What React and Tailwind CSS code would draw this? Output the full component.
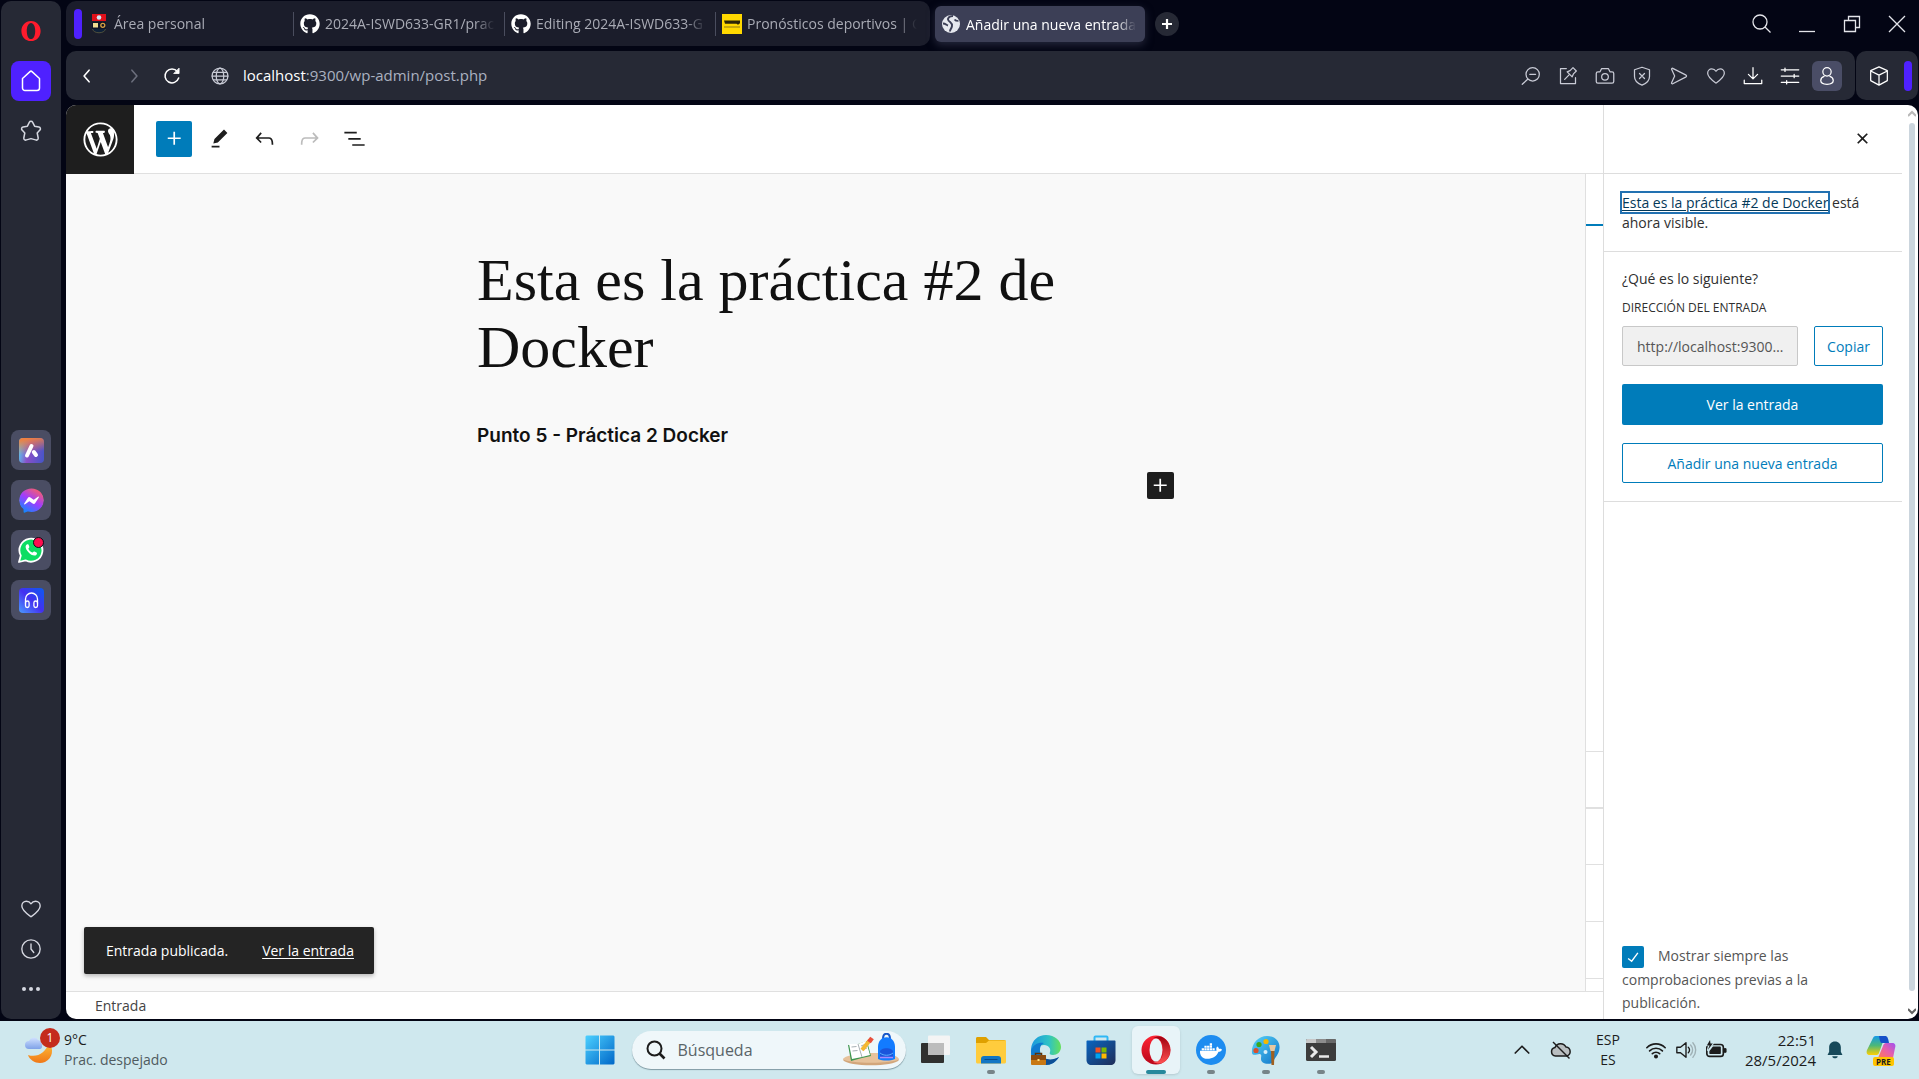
import React from "react";
import { FaGithub, FaFacebookMessenger, FaDocker } from "react-icons/fa";

const line = {
  fill: "none",
  stroke: "currentColor",
  strokeWidth: 1.5,
  strokeLinecap: "round",
  strokeLinejoin: "round",
};

function Svg({ size = 24, box = "0 0 24 24", className = "", children, ...rest }) {
  return (
    <svg width={size} height={size} viewBox={box} className={`shrink-0 ${className}`} aria-hidden="true" {...rest}>
      {children}
    </svg>
  );
}

function WpIcon({ d, className }) {
  return (
    <Svg size={27} fill="currentColor" className={className}>
      <path d={d} />
    </Svg>
  );
}

const PLUS = "M11 12.5V17.5H12.5V12.5H17.5V11H12.5V6H11V11H6V12.5H11Z";
const PENCIL = "m19 7-3-3-8.5 8.5-1 4 4-1L19 7Zm-7 11.5H5V20h7v-1.5Z";
const UNDO =
  "M18.3 11.7c-.6-.6-1.4-.9-2.3-.9H6.7l2.9-3.3-1.1-1-4.5 5L8.5 16l1-1-2.7-2.7H16c.5 0 .9.2 1.3.5 1 1 1 3.4 1 4.5v.3h1.5v-.2c0-1.5 0-4.3-1.5-5.7z";
const REDO =
  "M15.6 6.5l-1.1 1 2.9 3.3H8c-.9 0-1.7.3-2.3.9-1.4 1.5-1.4 4.2-1.4 5.6v.2h1.5v-.3c0-1.1 0-3.5 1-4.5.3-.3.7-.5 1.3-.5h9.2L14.5 15l1.1 1.1 4.6-4.6-4.6-5z";
const LIST = "M3 6h11v1.5H3V6Zm3.5 5.5h11V13h-11v-1.5ZM21 17H10v1.5h11V17Z";
const CLOSE =
  "M12 13.06l3.712 3.713 1.061-1.06L13.061 12l3.712-3.712-1.06-1.06L12 10.938 8.288 7.227l-1.061 1.06L10.939 12l-3.712 3.712 1.06 1.061L12 13.061z";
const WORDPRESS =
  "M20 10c0-5.51-4.49-10-10-10C4.48 0 0 4.49 0 10c0 5.52 4.48 10 10 10 5.51 0 10-4.48 10-10zM7.78 15.37L4.37 6.22c.55-.02 1.17-.08 1.17-.08.5-.06.44-1.13-.06-1.11 0 0-1.45.11-2.37.11-.18 0-.37 0-.58-.01C4.12 2.69 6.87 1.11 10 1.11c2.33 0 4.45.87 6.05 2.34-.68-.11-1.65.39-1.65 1.58 0 .74.45 1.36.9 2.1.35.61.55 1.36.55 2.46 0 1.49-1.4 5-1.4 5l-3.03-8.37c.54-.02.82-.17.82-.17.5-.05.44-1.25-.06-1.22 0 0-1.44.12-2.38.12-.87 0-2.33-.12-2.33-.12-.5-.03-.56 1.2-.06 1.22l.92.08 1.26 3.41zM17.41 10c.24-.64.74-1.87.43-4.25.7 1.29 1.05 2.71 1.05 4.25 0 3.29-1.73 6.24-4.4 7.78.97-2.59 1.94-5.2 2.92-7.78zM6.1 18.09C3.12 16.65 1.11 13.53 1.11 10c0-1.3.23-2.48.72-3.59C3.25 10.3 4.67 14.2 6.1 18.09zm4.03-6.63l2.58 6.98c-.86.29-1.76.45-2.71.45-.79 0-1.57-.11-2.29-.33.81-2.38 1.62-4.74 2.42-7.1z";

const HEART = "M12 20.5C8.500 18 2 13.500 2 8.700 2 5.700 4.200 3.500 7 3.500c2 0 3.800 1 5 2.800 1.200-1.800 3-2.800 5-2.800 2.800 0 5 2.200 5 5.200 0 4.800-6.500 9.300-10 11.800z";

/* ---------- Browser side bar ---------- */

function SideButton({ label, className = "", children }) {
  return (
    <button aria-label={label} className={`flex size-10 items-center justify-center rounded-lg ${className}`}>
      {children}
    </button>
  );
}

function SideBar() {
  return (
    <nav className="ml-px mt-px flex w-[60px] shrink-0 flex-col items-center rounded-[10px] bg-[#262935] text-[#d5d7e0]">
      <button aria-label="Opera" className="mt-5 flex size-5 items-center justify-center">
        <Svg size={22}>
          <path
            fillRule="evenodd"
            fill="#ff1b2d"
            d="M12 1C5.800 1 1.500 5.800 1.500 12S5.800 23 12 23s10.500-4.800 10.500-11S18.200 1 12 1zm0 2.200c3 0 4.600 4 4.600 8.800s-1.600 8.800-4.600 8.800S7.400 16.800 7.400 12 9 3.200 12 3.200z"
          />
        </Svg>
      </button>
      <SideButton label="Inicio" className="mt-5 bg-[#4f21ff] text-white">
        <Svg size={24} {...line}>
          <path d="M3.500 9.500 11 2.600a1.500 1.500 0 0 1 2 0l7.500 6.900V19a2.500 2.500 0 0 1-2.500 2.500H6A2.500 2.500 0 0 1 3.500 19z" />
        </Svg>
      </SideButton>
      <SideButton label="Favoritos" className="mt-[10px]">
        <Svg size={24} {...line}>
          <path d="M10.300 3.300a1.900 1.900 0 0 1 3.400 0l1.900 3.900 4.300.7a1.900 1.900 0 0 1 1 3.200l-2.700 2.900 1 5a1.800 1.800 0 0 1-2.600 1.900L12 19.600l-4.600 1.300A1.800 1.800 0 0 1 4.800 19l1-5-2.700-2.900a1.900 1.900 0 0 1 1-3.200l4.300-.7z" />
        </Svg>
      </SideButton>
      <div className="mt-[279px] flex flex-col gap-[10px]">
        <SideButton label="Aria" className="bg-[#4a4d63]">
          <Svg size={25} box="0 0 25 25">
            <defs>
              <linearGradient id="aria" x1="0" y1="0.400" x2="1" y2="0.600">
                <stop offset="0" stopColor="#58c8ee" />
                <stop offset="0.400" stopColor="#8a4fc8" />
                <stop offset="1" stopColor="#4a55c8" />
              </linearGradient>
              <linearGradient id="ariaTop" x1="0.400" y1="0" x2="0.600" y2="1">
                <stop offset="0" stopColor="#f08040" />
                <stop offset="0.600" stopColor="#f08040" stopOpacity="0" />
              </linearGradient>
            </defs>
            <rect width="25" height="25" rx="4" fill="url(#aria)" />
            <rect width="25" height="25" rx="4" fill="url(#ariaTop)" />
            <path d="M8 17.500 12.500 8M14.800 14l2.200 3" stroke="#fff" strokeWidth="4" strokeLinecap="round" />
          </Svg>
        </SideButton>
        <SideButton label="Messenger" className="bg-[#4a4d63]">
          <Svg size={25} box="0 0 512 512">
            <defs>
              <linearGradient id="msg" x1="0.200" y1="1" x2="0.800" y2="0">
                <stop offset="0" stopColor="#0a8cff" />
                <stop offset="0.500" stopColor="#a03cff" />
                <stop offset="1" stopColor="#ff6060" />
              </linearGradient>
            </defs>
            <ellipse cx="256" cy="250" rx="240" ry="220" fill="#fff" />
            <FaFacebookMessenger size={512} fill="url(#msg)" />
          </Svg>
        </SideButton>
        <SideButton label="WhatsApp" className="bg-[#4a4d63]">
          <Svg size={26} box="0 0 26 26">
            <path
              d="M1 25 2.800 18.600A11.500 11.500 0 1 1 7.500 23.300z"
              fill="#0ddd63"
              stroke="#fff"
              strokeWidth="1.800"
              strokeLinejoin="round"
            />
            <path
              d="M8.800 7.500c-1.800 1.200-1.600 4 1.200 7.200 3 3.500 6.500 4.800 8.300 3.200 1-1 .8-1.900.2-2.300l-2-1.100c-.7-.3-1 0-1.600.8-.5.500-1 .3-1.800-.2a9 9 0 0 1-2.700-3.200c-.2-.6.700-1 .9-1.700.2-.4-.6-2-.9-2.600-.4-.6-1-.5-1.600-.1z"
              fill="#fff"
            />
            <circle cx="20.500" cy="5.500" r="5" fill="#ff0f50" stroke="#0c0d16" strokeWidth="1" />
          </Svg>
        </SideButton>
        <SideButton label="Reproductor" className="bg-[#4a4d63]">
          <Svg size={25} box="0 0 25 25">
            <defs>
              <linearGradient id="player" x1="0" y1="1" x2="1" y2="0">
                <stop offset="0" stopColor="#4b9cff" />
                <stop offset="0.500" stopColor="#4430f0" />
                <stop offset="1" stopColor="#0a5cf0" />
              </linearGradient>
            </defs>
            <rect width="25" height="25" rx="4" fill="url(#player)" />
            <g fill="none" stroke="#fff" strokeWidth="1.300">
              <path d="M6.500 15.500V11a6 6 0 0 1 12 0v4.500" />
              <rect x="6.500" y="13" width="3.600" height="6.500" rx="1.800" />
              <rect x="14.900" y="13" width="3.600" height="6.500" rx="1.800" />
            </g>
          </Svg>
        </SideButton>
      </div>
      <div className="mt-auto flex flex-col pb-[10px]">
        <SideButton label="Me gusta">
          <Svg size={22} {...line}>
            <path d={HEART} />
          </Svg>
        </SideButton>
        <SideButton label="Historial">
          <Svg size={22} {...line}>
            <circle cx="12" cy="12" r="10" />
            <path d="M12 6.500V12l3 3.800" />
          </Svg>
        </SideButton>
        <SideButton label="Más">
          <Svg size={20} box="0 0 20 20" fill="currentColor">
            <circle cx="3" cy="10" r="2" />
            <circle cx="10" cy="10" r="2" />
            <circle cx="17" cy="10" r="2" />
          </Svg>
        </SideButton>
      </div>
    </nav>
  );
}

/* ---------- Tabs ---------- */

function Tab({ icon, title, className = "" }) {
  return (
    <button className={`flex h-9 w-[210px] shrink-0 items-center gap-[5px] pl-[6px] pr-[9px] text-left ${className}`}>
      {icon}
      <span className="flex-1 overflow-hidden whitespace-nowrap [mask-image:linear-gradient(to_right,black_88%,transparent)]">
        {title}
      </span>
    </button>
  );
}

function Divider() {
  return <span className="h-6 w-px shrink-0 bg-[#4a4d5e]" />;
}

function CrestIcon() {
  return (
    <Svg size={20} box="0 0 20 20">
      <rect x="3" y="0" width="14" height="7" fill="#e0101a" />
      <circle cx="10" cy="3.500" r="2.300" fill="#cfe6f5" />
      <rect x="3" y="8" width="14" height="8" fill="#101426" />
      <rect x="4" y="9" width="5" height="4.500" fill="#f0dc90" />
      <circle cx="13.800" cy="11.300" r="2" fill="none" stroke="#d8a040" strokeWidth="1.300" />
      <path d="M3.500 15c1 5 12 5 13 0" fill="#0e2038" stroke="#50503c" />
    </Svg>
  );
}

function TabStrip() {
  return (
    <header className="flex h-[50px] items-start text-[14px] text-[#a9abb5]">
      <div className="mt-px flex h-[45px] items-center rounded-[10px] bg-[#1b1d2b] pl-2 pr-1">
        <span className="h-[30px] w-2 rounded bg-[#4f21ff]" />
        <Tab icon={<CrestIcon />} title="Área personal" className="ml-px" />
        <Divider />
        <Tab icon={<FaGithub size={20} className="shrink-0 text-white" />} title="2024A-ISWD633-GR1/prac" />
        <Divider />
        <Tab icon={<FaGithub size={20} className="shrink-0 text-white" />} title="Editing 2024A-ISWD633-G" />
        <Divider />
        <Tab
          icon={
            <Svg size={20} box="0 0 20 20">
              <rect width="20" height="20" fill="#ffd800" />
              <path d="M2 6.500h16v2.800l-2 1.500-1.500-1H3z" fill="#2c2608" />
              <path d="M2 13h16" stroke="#b59a10" strokeWidth="1.500" />
            </Svg>
          }
          title="Pronósticos deportivos | Ca"
        />
      </div>
      <Tab
        icon={
          <Svg size={20} box="0 0 20 20">
            <circle cx="10" cy="10" r="9" fill="#e6e8ee" />
            <path
              d="M12 2C8 2 6 4.500 7.500 6.500S11.500 9 11 12s-2 3-2 5.500M2 9.500c2.500 0 3.500 1.500 5 2"
              fill="none"
              stroke="#3c3f56"
              strokeWidth="1.900"
            />
            <path d="M13.500 5.500c1 1.500 2.500 1.500 4 1.500" fill="none" stroke="#3c3f56" strokeWidth="1.700" />
          </Svg>
        }
        title="Añadir una nueva entrada"
        className="ml-[5px] mt-[6px] rounded-md bg-[#3c3f56] text-white shadow-[0_3px_8px_#3c3f5699]"
      />
      <button
        aria-label="Nueva pestaña"
        className="ml-[10px] mt-3 flex size-6 items-center justify-center rounded-full bg-[#262935] text-white"
      >
        <Svg size={12} box="0 0 12 12" stroke="currentColor" strokeWidth="2.200">
          <path d="M6 1v10M1 6h10" />
        </Svg>
      </button>
      <div className="ml-auto mt-2 flex items-center gap-[13px] pr-[5px] text-[#e4e5ea]">
        <WindowButton label="Buscar">
          <circle cx="8" cy="8" r="7" />
          <path d="m13 13 5.500 5.500" />
        </WindowButton>
        <WindowButton label="Minimizar">
          <path d="M2 17.500h16" />
        </WindowButton>
        <WindowButton label="Restaurar">
          <path d="M2.500 6.500h11v11h-11zM6.500 6.500v-4h11v11h-4" />
        </WindowButton>
        <WindowButton label="Cerrar">
          <path d="m2 2 16 16M18 2 2 18" />
        </WindowButton>
      </div>
    </header>
  );
}

function WindowButton({ label, children }) {
  return (
    <button aria-label={label} className="flex size-8 items-center justify-center">
      <Svg size={20} box="0 0 20 20" fill="none" stroke="currentColor" strokeWidth="1.300">
        {children}
      </Svg>
    </button>
  );
}

/* ---------- Address bar ---------- */

function BarButton({ label, className = "", children }) {
  return (
    <button aria-label={label} className={`flex size-[30px] shrink-0 items-center justify-center rounded-md ${className}`}>
      <Svg size={20} {...line}>
        {children}
      </Svg>
    </button>
  );
}

function AddressBar() {
  return (
    <div className="flex h-[49px] shrink-0 gap-px text-[#c9cbd6]">
      <div className="flex flex-1 items-center rounded-[10px] bg-[#262935] pr-[13px]">
        <BarButton label="Atrás" className="ml-[6px] text-white">
          <path d="m14.500 5-6 7 6 7" strokeWidth="1.900" />
        </BarButton>
        <BarButton label="Adelante" className="ml-[17px] text-[#6b6e7c]">
          <path d="m9.500 5 6 7-6 7" strokeWidth="1.900" />
        </BarButton>
        <BarButton label="Recargar" className="ml-2 text-white">
          <path d="M20 14.500A8.400 8.400 0 1 1 18.500 6.500" strokeWidth="1.800" />
          <path d="M20.500 3v6h-6z" fill="currentColor" strokeWidth="1" />
        </BarButton>
        <BarButton label="Información del sitio" className="ml-[18px]">
          <circle cx="12" cy="12" r="9.500" />
          <ellipse cx="12" cy="12" rx="4.500" ry="9.500" />
          <path d="M2.500 12h19M4 7.500h16M4 16.500h16" />
        </BarButton>
        <a href="#url" className="ml-2 text-[15px] text-[#aab1c0]">
          <span className="text-white">localhost</span>:9300/wp-admin/post.php
        </a>
        <div className="ml-auto flex gap-[7px]">
          <BarButton label="Reducir zoom">
            <circle cx="14" cy="10" r="8" />
            <path d="m8 16-6.500 6M10.500 10h7" />
          </BarButton>
          <BarButton label="Notas">
            <path d="M10 3H3v18h18v-7M8 16l5-5M11 7l6 6 1.500-3.500L22 6l-4-4-3.500 3.500z" />
          </BarButton>
          <BarButton label="Instantánea">
            <path d="M1.500 9c0-1.200.8-2 2-2H6l2-4h8l2 4h2.500c1.200 0 2 .8 2 2v9.500c0 1.200-.8 2-2 2h-17c-1.200 0-2-.8-2-2z" />
            <circle cx="12" cy="13" r="4" />
          </BarButton>
          <BarButton label="Bloqueador">
            <path d="M12 1.500 21 4.500v8c0 5-4 8.500-9 10.500-5-2-9-5.500-9-10.500v-8zM9 9l6 6M15 9l-6 6" />
          </BarButton>
          <BarButton label="Enviar">
            <path d="M4.500 2.800 20.500 11a1.200 1.200 0 0 1 0 2L4.500 21.300a1 1 0 0 1-1.400-1.300L6.800 12 3.100 4a1 1 0 0 1 1.400-1.200z" />
          </BarButton>
          <BarButton label="Guardar">
            <path d={HEART} />
          </BarButton>
          <BarButton label="Descargas" className="text-white">
            <path d="M12 2v13M6.500 10l5.500 5.500L17.500 10M1.500 17v4h21v-4" />
          </BarButton>
          <BarButton label="Ajustes" className="text-white">
            <path d="M1.500 4.500h21M1.500 12h21M1.500 19.500h21" />
            <path d="M6 2.500v4M17 10v4M8 17.500v4" />
          </BarButton>
          <BarButton label="Perfil" className="bg-[#4a4d66] text-white">
            <circle cx="12" cy="7" r="5" />
            <path d="M8.500 12.500a5.500 5.500 0 0 0-4 5C4.500 20.500 7 22 12 22s7.500-1.500 7.500-4.500a5.500 5.500 0 0 0-4-5" />
          </BarButton>
        </div>
      </div>
      <div className="flex w-[62px] items-center rounded-[10px] bg-[#262935] pl-2 text-white">
        <BarButton label="Extensiones">
          <path d="m12 1 10 4.500v12L12 23 2 17.500v-12zM2 6l10 5 10-5M12 11v12" />
        </BarButton>
        <span className="ml-[10px] h-[30px] w-2 rounded bg-[#4f21ff]" />
      </div>
    </div>
  );
}

/* ---------- Post editor ---------- */

function ToolButton({ label, d, className = "" }) {
  return (
    <button aria-label={label} className={`flex size-9 items-center justify-center rounded-xs ${className}`}>
      <WpIcon d={d} />
    </button>
  );
}

function Editor() {
  return (
    <div className="flex min-w-0 flex-1 flex-col">
      <div className="flex h-[69px] shrink-0 items-center border-b border-[#e0e0e0] pb-px">
        <a href="#dashboard" aria-label="WordPress" className="-mb-[2px] flex h-[69px] w-[68px] items-center justify-center bg-[#1e1e1e] text-white">
          <Svg size={41} box="-2 -2 24 24" fill="currentColor">
            <path d={WORDPRESS} />
          </Svg>
        </a>
        <div className="ml-[22px] flex gap-[9px]">
          <ToolButton label="Añadir bloque" d={PLUS} className="bg-[#007cba] text-white" />
          <ToolButton label="Herramientas" d={PENCIL} />
          <ToolButton label="Deshacer" d={UNDO} />
          <ToolButton label="Rehacer" d={REDO} className="text-[#bcbcbc]" />
          <ToolButton label="Vista de lista" d={LIST} />
        </div>
      </div>
      <div className="flex min-h-0 flex-1">
        <main className="relative flex flex-1 justify-center bg-[#f9f9f9]">
          <article className="w-[697px] pt-[73px] text-[#111]">
            <h1 className="font-['Liberation_Serif',serif] text-[60px] leading-[67px]">
              Esta es la práctica #2 de
              <br />
              Docker
            </h1>
            <p className="mt-10 font-['Inter',sans-serif] text-[19px] font-semibold leading-[30px]">
              Punto 5 - Práctica 2 Docker
            </p>
            <div className="mt-[21px] flex justify-end">
              <button
                aria-label="Añadir bloque"
                className="flex size-[27px] items-center justify-center rounded-xs bg-[#1e1e1e] text-white"
              >
                <WpIcon d={PLUS} />
              </button>
            </div>
          </article>
          <div
            role="status"
            className="absolute bottom-[17px] left-[18px] flex h-[47px] items-center gap-[34px] rounded-xs bg-[#242424] pl-[22px] pr-5 text-[14px] text-white shadow-[0_2px_4px_#0004]"
          >
            <span>Entrada publicada.</span>
            <a href="#view" className="underline underline-offset-2">
              Ver la entrada
            </a>
          </div>
        </main>
        <div className="flex w-[18px] flex-col border-l border-[#e0e0e0]">
          <div className="h-[52px] border-b-2 border-[#007cba]" />
          <div className="flex-1 border-b border-[#e0e0e0]" />
          <div className="h-[57px] border-b-2 border-[#e0e0e0]" />
          <div className="h-[56px] border-b border-[#e0e0e0]" />
          <div className="h-[57px] border-b border-[#e0e0e0]" />
          <div className="h-[57px] border-b border-[#e0e0e0]" />
          <div className="h-3" />
        </div>
      </div>
      <footer className="flex h-7 shrink-0 items-center border-t border-[#e0e0e0] px-[29px] text-[14px] text-[#444]">
        Entrada
      </footer>
    </div>
  );
}

function PublishPanel() {
  return (
    <aside className="flex w-[299px] shrink-0 flex-col border-l border-[#ddd] text-[14px] text-[#2f2f2f]">
      <div className="flex h-[69px] shrink-0 items-center justify-end border-b border-[#ddd] pb-px pr-[22px]">
        <ToolButton label="Cerrar panel" d={CLOSE} className="text-[#1e1e1e]" />
      </div>
      <p className="border-b border-[#ddd] px-[18px] pb-[18px] pt-[19px] leading-5">
        <a
          href="#post"
          className="whitespace-nowrap text-[#043959] underline underline-offset-2 outline-2 outline-[#2271b1]"
        >
          Esta es la práctica #2 de Docker
        </a>{" "}
        está ahora visible.
      </p>
      <div className="border-b border-[#ddd] pb-[18px] pl-[18px] pr-[19px] pt-[17px]">
        <h2 className="leading-5">¿Qué es lo siguiente?</h2>
        <label htmlFor="post-url" className="mt-[9px] block text-[12px] leading-5">
          DIRECCIÓN DEL ENTRADA
        </label>
        <div className="mt-2 flex gap-4">
          <input
            id="post-url"
            readOnly
            value="http://localhost:9300/?p=12"
            className="h-10 min-w-0 flex-1 truncate rounded-xs border border-[#c8c8c8] bg-[#f0f0f0] pl-[14px] pr-[10px] text-[#555]"
          />
          <button className="h-10 w-[69px] rounded-xs border border-[#007cba] text-[#007cba]">Copiar</button>
        </div>
        <a
          href="#view-post"
          className="mt-[18px] flex h-[41px] items-center justify-center rounded-xs bg-[#007cba] text-white"
        >
          Ver la entrada
        </a>
        <a
          href="#new-post"
          className="mt-[18px] flex h-10 items-center justify-center rounded-xs border border-[#007cba] text-[#007cba]"
        >
          Añadir una nueva entrada
        </a>
      </div>
      <label className="mt-auto block px-[18px] pb-[5px] leading-[23px] text-[#555]">
        <span className="relative mr-[14px] inline-block size-[22px] align-middle">
          <input
            type="checkbox"
            defaultChecked
            className="block size-[22px] appearance-none rounded-xs bg-[#007cba]"
          />
          <Svg size={22} fill="#fff" className="pointer-events-none absolute inset-0">
            <path d="M16.700 7.100l-6.300 8.500-3.300-2.500-.9 1.200 4.500 3.400L17.900 8z" />
          </Svg>
        </span>
        Mostrar siempre las comprobaciones previas a la publicación.
      </label>
    </aside>
  );
}

function ScrollBar() {
  return (
    <div className="flex w-4 shrink-0 flex-col items-center pl-1 pt-[5px]">
      <Svg size={8} box="0 0 8 8" fill="none" stroke="#b8b8b8" strokeWidth="2">
        <path d="m0 6 4-4 4 4" />
      </Svg>
      <div className="mt-[5px] w-[6px] flex-1 rounded bg-[#cbd5dd]" />
      <Svg size={8} box="0 0 8 8" fill="none" stroke="#606060" strokeWidth="2" className="mb-1 mt-4">
        <path d="m0 2 4 4 4-4" />
      </Svg>
    </div>
  );
}

/* ---------- Task bar ---------- */

function TaskButton({ label, active, running, children }) {
  return (
    <button
      aria-label={label}
      className={`relative flex size-12 shrink-0 items-center justify-center rounded-md ${active ? "bg-[#e8f4f8] shadow-sm" : ""}`}
    >
      <Svg size={30} box="0 0 30 30">
        {children}
      </Svg>
      {running && (
        <span
          className={`absolute bottom-0 h-1 rounded-full ${active ? "w-5 bg-[#26889c]" : "w-2 bg-[#768488]"}`}
        />
      )}
    </button>
  );
}

function TaskBar() {
  return (
    <footer className="flex h-[58px] shrink-0 items-center bg-[#cfe8ee] text-[#1c1c1c]">
      <div className="flex flex-1 items-center pl-6">
        <div className="relative">
          <Svg size={32} box="0 0 32 32">
            <defs>
              <linearGradient id="moon" x1="0" y1="0" x2="0" y2="1">
                <stop offset="0" stopColor="#ffc03a" />
                <stop offset="1" stopColor="#f07818" />
              </linearGradient>
              <linearGradient id="cloud" x1="0" y1="0" x2="0" y2="1">
                <stop offset="0" stopColor="#d0e0ff" />
                <stop offset="1" stopColor="#7fa2e8" />
              </linearGradient>
            </defs>
            <path d="M25 8c5 7 4 16-4 20-7 3-15-1-17-7 9 3 18-2 21-13z" fill="url(#moon)" />
            <path d="M5 15a4 4 0 0 1 0-8 5 5 0 0 1 9-1c4 0 6 9 2 9z" fill="url(#cloud)" />
          </Svg>
          <span className="absolute -right-1 -top-[6px] flex size-5 items-center justify-center rounded-full bg-[#c42b1c] text-[12px] text-white">
            1
          </span>
        </div>
        <div className="ml-2 text-[14px] leading-5">
          <div>9°C</div>
          <div className="text-[#4f5b60]">Prac. despejado</div>
        </div>
      </div>
      <div className="flex items-center">
        <button aria-label="Inicio" className="flex size-12 items-center justify-center">
          <Svg size={30} box="0 0 30 30">
            <defs>
              <linearGradient id="win" x1="0" y1="0" x2="1" y2="1">
                <stop offset="0" stopColor="#4cd0ff" />
                <stop offset="1" stopColor="#0067c8" />
              </linearGradient>
            </defs>
            <path fill="url(#win)" d="M1.500.5H14v14H.5v-13zM15 .5h13.500l1 1v13H15zM.5 15.500H14v14H1.500l-1-1zM15 15.500h14.500v13l-1 1H15z" />
          </Svg>
        </button>
        <label className="ml-2 flex h-[38px] w-[274px] items-center gap-3 rounded-full bg-[#eff7fa] pl-[14px] pr-[6px] shadow-[0_1px_1px_#7f9aa3]">
          <Svg size={20} box="0 0 20 20" fill="none" stroke="#1c1c1c" strokeWidth="2">
            <circle cx="8.500" cy="8.500" r="7" />
            <path d="m13.500 13.500 5 5" strokeWidth="2.600" />
          </Svg>
          <input
            aria-label="Búsqueda"
            placeholder="Búsqueda"
            className="w-0 min-w-0 flex-1 bg-transparent text-[16px] outline-none placeholder:text-[#596468] placeholder:opacity-100"
          />
          <svg width="58" height="34" viewBox="0 0 58 34" className="shrink-0" aria-hidden="true">
            <path d="M1 27c4-7 52-9 56 0-5 7-51 7-56 0z" fill="#d2a67b" />
            <path d="M1 26c4-7 52-9 56 0-5 5-51 5-56 0z" fill="#e6c29b" />
            <path d="m6 12 10-1 9-3 4 15-9 2-11 3z" fill="#3f9650" />
            <path d="m7 11 9 0 8-3 4 14-8 2-10 2z" fill="#fff" />
            <path d="m16 11 4 13M9.500 14l5-.5M10.500 18l5-.5M19 13l5-2M20 17l5-2" stroke="#a8b0b4" />
            <path d="m20 17 8-10" stroke="#f5b832" strokeWidth="4" />
            <path d="m27 9 3-4" stroke="#e8503c" strokeWidth="4.500" />
            <path d="M41 6c0-7 7-7 7 0" fill="none" stroke="#1656c8" strokeWidth="2" />
            <path d="M36 14c0-13 17-13 17 0v12c-5 2-12 2-17 0z" fill="#127bff" />
            <path d="M38 19c0-5 13-5 13 0v6H38z" fill="#1a55dc" />
            <path d="M38 20c4 3 9 3 13 0" fill="none" stroke="#5cb2ff" />
            <path d="M38 24.500h13" stroke="#a889ff" strokeWidth="1.500" />
          </svg>
        </label>
        <div className="ml-[6px] flex gap-[7px]">
          <TaskButton label="Vista de tareas">
            <rect x="0" y="8" width="23" height="20" rx="1" fill="#30302f" />
            <rect x="7" y="0.500" width="22" height="19.500" rx="1" fill="#f4f4f4" />
            <path d="M7 8h16v12H7z" fill="#bcbcbc" />
          </TaskButton>
          <TaskButton label="Explorador de archivos" running>
            <path d="M0 3.500C0 2.500.7 2 1.500 2H10l3 3h15c1.200 0 2 .8 2 2v5H0z" fill="#dfa000" />
            <path d="M0 8h10l3-2.500h17V27c0 .8-.7 1.500-1.500 1.500h-27C.7 28.500 0 27.800 0 27z" fill="#ffcc3d" />
            <path d="M5 28.500V24c0-2 1-3 3-3h14c2 0 3 1 3 3v4.500z" fill="#1276c4" />
            <path d="M8.500 24.500h13" stroke="#0a4b8a" />
          </TaskButton>
          <TaskButton label="Edge">
            <defs>
              <linearGradient id="edge" x1="0" y1="0.500" x2="1" y2="0.500">
                <stop offset="0" stopColor="#1997e0" />
                <stop offset="0.600" stopColor="#2fc3c4" />
                <stop offset="1" stopColor="#66e05a" />
              </linearGradient>
            </defs>
            <path d="M0 14C1 5 7 0 15 0c9 0 15 6 15 12 0 5-4 8-8 8-3 0-4-1-3-3 1-3-1-7-6-7S3 13 0 22z" fill="url(#edge)" />
            <path d="M0 16C2 9 8 7 13 8c-5 2-5 9-2 13 4 5 11 5 17 1-3 5-8 8-13 8C6 30 0 24 0 16z" fill="#0f7bcf" />
            <path d="M11 19c1 6 10 7 17 3-3 5-8 8-13 8z" fill="#0d4f96" />
            <rect x="0" y="20" width="15" height="10" rx="1" fill="#c87814" />
            <path d="M0 21c0-.6.400-1 1-1h13c.6 0 1 .4 1 1v4H0z" fill="#8a4a10" />
            <path d="M4.500 20v-1.500h6V20" fill="none" stroke="#5e3208" strokeWidth="1.500" />
            <rect x="6.500" y="24" width="2" height="2" fill="#ffe080" />
          </TaskButton>
          <TaskButton label="Microsoft Store">
            <defs>
              <linearGradient id="store" x1="0" y1="0" x2="1" y2="1">
                <stop offset="0" stopColor="#0a65c0" />
                <stop offset="1" stopColor="#1f2d58" />
              </linearGradient>
            </defs>
            <path d="M8.500 6V2.500c0-.6.400-1 1-1h11c.6 0 1 .4 1 1V6" fill="none" stroke="#2fb8f5" strokeWidth="2" />
            <path d="M.5 6.500c0-.6.400-1 1-1h27c.6 0 1 .4 1 1V25c0 3-2 5-5 5h-19c-3 0-5-2-5-5z" fill="url(#store)" />
            <path d="M9.500 12.500h5v5h-5z" fill="#f25022" />
            <path d="M15.500 12.500h5v5h-5z" fill="#7fba00" />
            <path d="M9.500 18.500h5v5h-5z" fill="#00a4ef" />
            <path d="M15.500 18.500h5v5h-5z" fill="#ffb900" />
          </TaskButton>
          <TaskButton label="Opera" active running>
            <defs>
              <linearGradient id="op" x1="0" y1="0" x2="0" y2="1">
                <stop offset="0" stopColor="#ff2434" />
                <stop offset="1" stopColor="#b8061a" />
              </linearGradient>
              <linearGradient id="op2" x1="0" y1="0" x2="0" y2="1">
                <stop offset="0" stopColor="#a00010" />
                <stop offset="1" stopColor="#ff5252" />
              </linearGradient>
            </defs>
            <ellipse cx="15" cy="15" rx="14.500" ry="14.500" fill="url(#op)" />
            <path d="M11 3.500C22-3 29 7 29.300 15c-.3 8-7 18-18 11.500 6 2 11-3 11-11.500S17 1.500 11 3.500z" fill="url(#op2)" />
            <ellipse cx="15" cy="15" rx="6.500" ry="11.500" fill="#e8f4f8" />
          </TaskButton>
          <TaskButton label="Docker" running>
            <circle cx="15" cy="15" r="15" fill="#1d8cf0" />
            <FaDocker x="4" y="5" size={22} color="#fff" />
          </TaskButton>
          <TaskButton label="Paint" running>
            <defs>
              <linearGradient id="paint" x1="0" y1="0" x2="1" y2="1">
                <stop offset="0" stopColor="#58d4f8" />
                <stop offset="1" stopColor="#0f72c8" />
              </linearGradient>
            </defs>
            <path d="M1 18C0 9 7 1 16 1c8 0 13 5 12.500 12-.4 7-5 9-6.500 15-7 2-12 0-12-4 0-3 1-4-1-5-2-.8-7 3-8-1z" fill="url(#paint)" />
            <circle cx="8" cy="9.500" r="2.600" fill="#3aa81e" />
            <circle cx="15" cy="6.500" r="2.600" fill="#f5b800" />
            <circle cx="5" cy="15.500" r="2.600" fill="#d8502c" />
            <circle cx="14.500" cy="17" r="2" fill="#d6eef8" />
            <path d="M18 10h7l-1.500 6h-4z" fill="#e8c8a0" />
            <path d="M20 16h3.500l-.5 14h-2.500z" fill="#a06020" />
          </TaskButton>
          <TaskButton label="Terminal" running>
            <rect x="0" y="4" width="30" height="22" rx="1.500" fill="#3c3c3c" />
            <path d="M0 8V5.500C0 4.700.7 4 1.500 4H10v4z" fill="#c8c8c8" />
            <path d="M10 4h10v4H10z" fill="#8c8c8c" />
            <path d="M20 4h8.500c.8 0 1.500.7 1.500 1.500V8H20z" fill="#686868" />
            <path d="m5 12 5 5-5 5" fill="none" stroke="#e8e8e8" strokeWidth="3" />
            <path d="M13 21.500h10" stroke="#e8e8e8" strokeWidth="2.500" />
          </TaskButton>
        </div>
      </div>
      <div className="flex flex-1 items-center justify-end pr-[23px]">
        <button aria-label="Iconos ocultos" className="mr-[19px]">
          <Svg size={18} {...line} strokeWidth="2.200">
            <path d="m3 16 9-9 9 9" />
          </Svg>
        </button>
        <button aria-label="OneDrive" className="mr-6">
          <Svg size={22} box="0 0 22 22" fill="none" stroke="#1c1c1c" strokeWidth="1.500">
            <path d="M5.500 17a4.300 4.300 0 0 1-.5-8.500 6 6 0 0 1 11-.5 4.600 4.600 0 0 1 .8 9z" fill="#b9bec0" />
            <path d="m3 3 16.500 16.500" />
          </Svg>
        </button>
        <div className="mr-[25px] text-center text-[14px] leading-5">
          <div>ESP</div>
          <div>ES</div>
        </div>
        <div className="mr-[18px] flex items-center gap-2">
          <Svg size={22} {...line} strokeWidth="1.800">
            <path d="M2 9.500a14 14 0 0 1 20 0M5 13a10 10 0 0 1 14 0M8 16a6 6 0 0 1 8 0" />
            <circle cx="12" cy="19" r="1.300" fill="currentColor" />
          </Svg>
          <Svg size={22} {...line}>
            <path d="M2 9h4l6-5v16l-6-5H2zM14.500 9a4 4 0 0 1 0 6" />
            <path d="M17 6.500a8 8 0 0 1 0 11M19.500 4a12 12 0 0 1 0 16" stroke="#9fb0b5" />
          </Svg>
          <Svg size={22} {...line}>
            <rect x="2" y="6" width="18" height="13" rx="3" strokeWidth="1.800" />
            <path d="M5.500 15.500v-2L9 9h7.500v6.500z" fill="currentColor" strokeWidth="1.500" />
            <path d="M20.500 10.500h2.500v4h-2.500z" fill="currentColor" strokeWidth="1" />
            <path
              d="M5.500 1 2 7h3l-2 5 5.500-7H6z"
              fill="currentColor"
              stroke="#cfe8ee"
              strokeWidth="2"
              paintOrder="stroke"
            />
          </Svg>
        </div>
        <time className="text-right text-[15px] leading-5">
          <div>22:51</div>
          <div>28/5/2024</div>
        </time>
        <button aria-label="Notificaciones" className="ml-[10px]">
          <Svg size={18} box="0 0 18 20" fill="#17495a">
            <path d="M9 .5c4 0 6.500 3 6.500 6.500v5l1.800 3.500H.7L2.500 12V7C2.500 3.500 5 .5 9 .5zM6 17h6c0 3-6 3-6 0z" />
          </Svg>
        </button>
        <button aria-label="Copilot" className="relative ml-[22px] flex size-[30px]">
          <Svg size={30} box="0 0 30 30">
            <defs>
              <linearGradient id="cpa" x1="0" y1="0" x2="0" y2="1">
                <stop offset="0" stopColor="#169ae8" />
                <stop offset="0.500" stopColor="#4cb878" />
                <stop offset="1" stopColor="#ffd000" />
              </linearGradient>
              <linearGradient id="cpb" x1="0" y1="1" x2="1" y2="0">
                <stop offset="0" stopColor="#ff7a50" />
                <stop offset="0.500" stopColor="#e860a8" />
                <stop offset="1" stopColor="#a050f0" />
              </linearGradient>
            </defs>
            <path d="M7 3c1-2 2-2 4-2h8l-6 17c-.5 1.500-1.500 2-3 2H4c-3 0-4-2-3-5z" fill="url(#cpa)" />
            <path d="M13 1h6c2 0 3 1 4 7h-6c-2 0-3 0-4-7z" fill="#1450c8" />
            <path d="M17 11c1-3 2-3 4-3h5c3 0 4 2 3 5l-2 10H12z" fill="url(#cpb)" />
          </Svg>
          <span className="absolute -bottom-px left-[7px] rounded-xs bg-[#ffc400] px-[3px] text-[8px] font-bold leading-[9px]">
            PRE
          </span>
        </button>
      </div>
    </footer>
  );
}

export default function App() {
  return (
    <div className="flex h-screen flex-col overflow-hidden bg-[#030514] font-['Open_Sans','Noto_Sans',sans-serif]">
      <div className="flex min-h-0 flex-1 gap-[5px] pb-[2px] pr-px">
        <SideBar />
        <div className="flex min-w-0 flex-1 flex-col">
          <TabStrip />
          <div className="mt-px">
            <AddressBar />
          </div>
          <div className="mt-[5px] flex min-h-0 flex-1 overflow-hidden rounded-[10px] bg-white text-[#1e1e1e]">
            <Editor />
            <PublishPanel />
            <ScrollBar />
          </div>
        </div>
      </div>
      <TaskBar />
    </div>
  );
}
